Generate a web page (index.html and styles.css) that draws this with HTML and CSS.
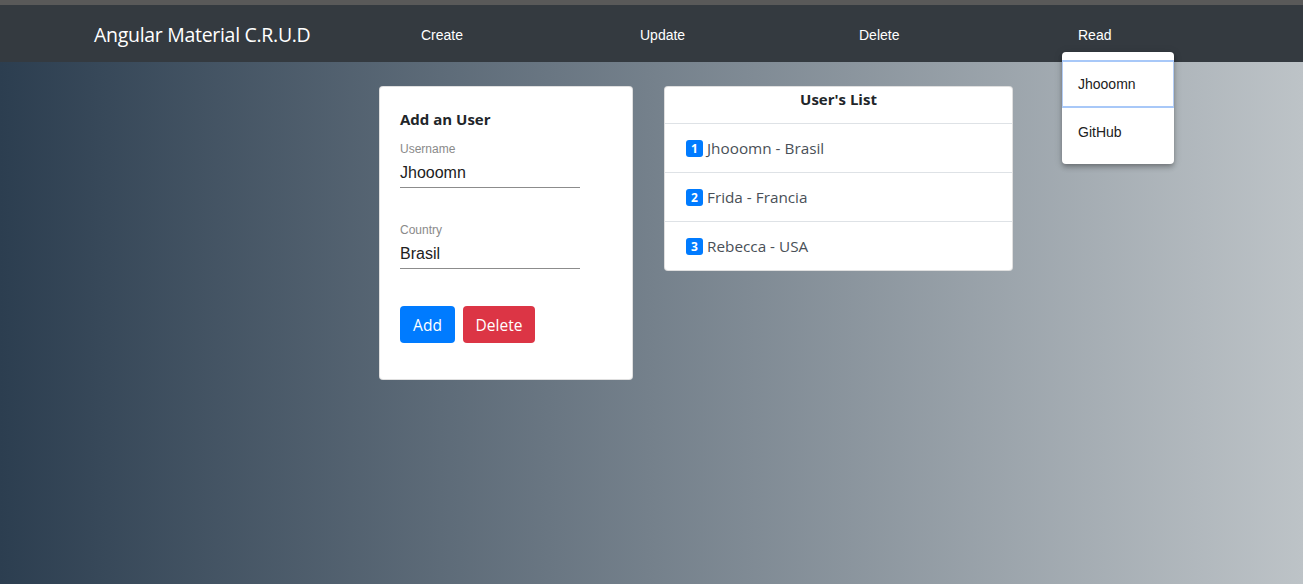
FILE: index.html
```html
<!DOCTYPE html>
<html lang="en">
<head>
<meta charset="utf-8">
<title>Angular Material C.R.U.D</title>
<link rel="stylesheet" href="styles.css">
</head>
<body>
<div class="chrome-strip"></div>
<header class="toolbar">
  <span class="brand">Angular Material C.R.U.D</span>
  <nav class="nav">
    <a class="nav-link">Create</a>
    <a class="nav-link">Update</a>
    <a class="nav-link">Delete</a>
    <a class="nav-link">Read</a>
  </nav>
</header>
<main class="content">
  <section class="card form-card">
    <h5 class="card-title">Add an User</h5>
    <div class="field">
      <span class="field-label">Username</span>
      <span class="field-value">Jhooomn</span>
    </div>
    <div class="field">
      <span class="field-label">Country</span>
      <span class="field-value">Brasil</span>
    </div>
    <div class="actions">
      <button class="btn btn-primary">Add</button>
      <button class="btn btn-danger">Delete</button>
    </div>
  </section>
  <section class="card list-card">
    <div class="list-header">User's List</div>
    <ul class="list-group">
      <li class="list-item"><span class="badge">1</span>Jhooomn - Brasil</li>
      <li class="list-item"><span class="badge">2</span>Frida - Francia</li>
      <li class="list-item"><span class="badge">3</span>Rebecca - USA</li>
    </ul>
  </section>
</main>
<div class="menu">
  <div class="menu-item focused">Jhooomn</div>
  <div class="menu-item">GitHub</div>
</div>
</body>
</html>
```

FILE: styles.css
```css
* { box-sizing: border-box; }
html, body { margin: 0; padding: 0; }
body {
  min-height: 100vh;
  background: linear-gradient(to right, #2c3e50, #bdc3c7);
  font-family: "Open Sans", "Noto Sans", sans-serif;
  overflow: hidden;
}
.chrome-strip {
  height: 5px;
  background: #595959;
}
.toolbar {
  height: 57px;
  background: #343a40;
  display: flex;
  align-items: center;
  padding-left: 94px;
}
.brand {
  width: 327px;
  color: #ffffff;
  font-family: "Open Sans", sans-serif;
  font-size: 19.5px;
  letter-spacing: -0.3px;
  margin-top: 2px;
}
.nav { display: flex; }
.nav-link {
  width: 219px;
  color: #ffffff;
  font-family: "Liberation Sans", Arial, sans-serif;
  font-size: 14px;
  margin-top: 2px;
}
.content {
  display: flex;
  align-items: flex-start;
  gap: 31px;
  padding: 24px 0 0 379px;
}
.card {
  background: #ffffff;
  border: 1px solid rgba(0,0,0,0.125);
  border-radius: 4px;
}
.form-card {
  width: 254px;
  height: 294px;
  padding: 23px 20px 0 20px;
}
.card-title {
  margin: 0 0 14px 0;
  font-size: 15px;
  font-weight: 700;
  color: #212529;
  line-height: 18px;
}
.field {
  width: 180px;
  display: flex;
  flex-direction: column;
  border-bottom: 1px solid #8c8c8c;
  margin-bottom: 35px;
  font-family: "Liberation Sans", Arial, sans-serif;
}
.field-label {
  font-size: 12px;
  line-height: 14px;
  color: #8a8a8a;
}
.field-value {
  font-size: 16px;
  line-height: 20px;
  color: #212121;
  padding: 7px 0 4px 0;
}
.actions {
  display: flex;
  gap: 8px;
  padding-top: 2px;
}
.btn {
  border: none;
  border-radius: 4px;
  color: #ffffff;
  font-family: "Open Sans", sans-serif;
  font-size: 15.5px;
  height: 37px;
  padding: 0;
}
.btn-primary { background: #007bff; width: 55px; }
.btn-danger { background: #dc3545; width: 72px; }
.list-card {
  width: 349px;
}
.list-header {
  height: 36px;
  text-align: center;
  font-size: 15px;
  font-weight: 700;
  color: #212529;
  line-height: 24px;
}
.list-group {
  list-style: none;
  margin: 0;
  padding: 0;
  border-top: 1px solid #dee2e6;
}
.list-item {
  height: 49px;
  display: flex;
  align-items: center;
  padding-left: 21px;
  font-size: 15.3px;
  color: #495057;
  border-bottom: 1px solid #dee2e6;
}
.list-item:last-child { border-bottom: none; height: 48px; }
.badge {
  width: 17px;
  height: 17px;
  border-radius: 3px;
  background: #007bff;
  color: #ffffff;
  font-size: 12px;
  font-weight: 700;
  display: flex;
  align-items: center;
  justify-content: center;
  margin-right: 4px;
}
.menu {
  position: absolute;
  left: 1062px;
  top: 52px;
  width: 112px;
  padding: 8px 0;
  background: #ffffff;
  border-radius: 4px;
  box-shadow: 0 2px 4px -1px rgba(0,0,0,0.2), 0 4px 5px 0 rgba(0,0,0,0.14), 0 1px 10px 0 rgba(0,0,0,0.12);
}
.menu-item {
  height: 48px;
  display: flex;
  align-items: center;
  padding-left: 16px;
  font-family: "Liberation Sans", Arial, sans-serif;
  font-size: 14px;
  color: #212121;
}
.menu-item.focused {
  border: 1px solid #b3cdf5;
  border-top: 2px solid #a8c8f8;
  border-bottom: 2px solid #a8c8f8;
  padding-left: 15px;
}
```
